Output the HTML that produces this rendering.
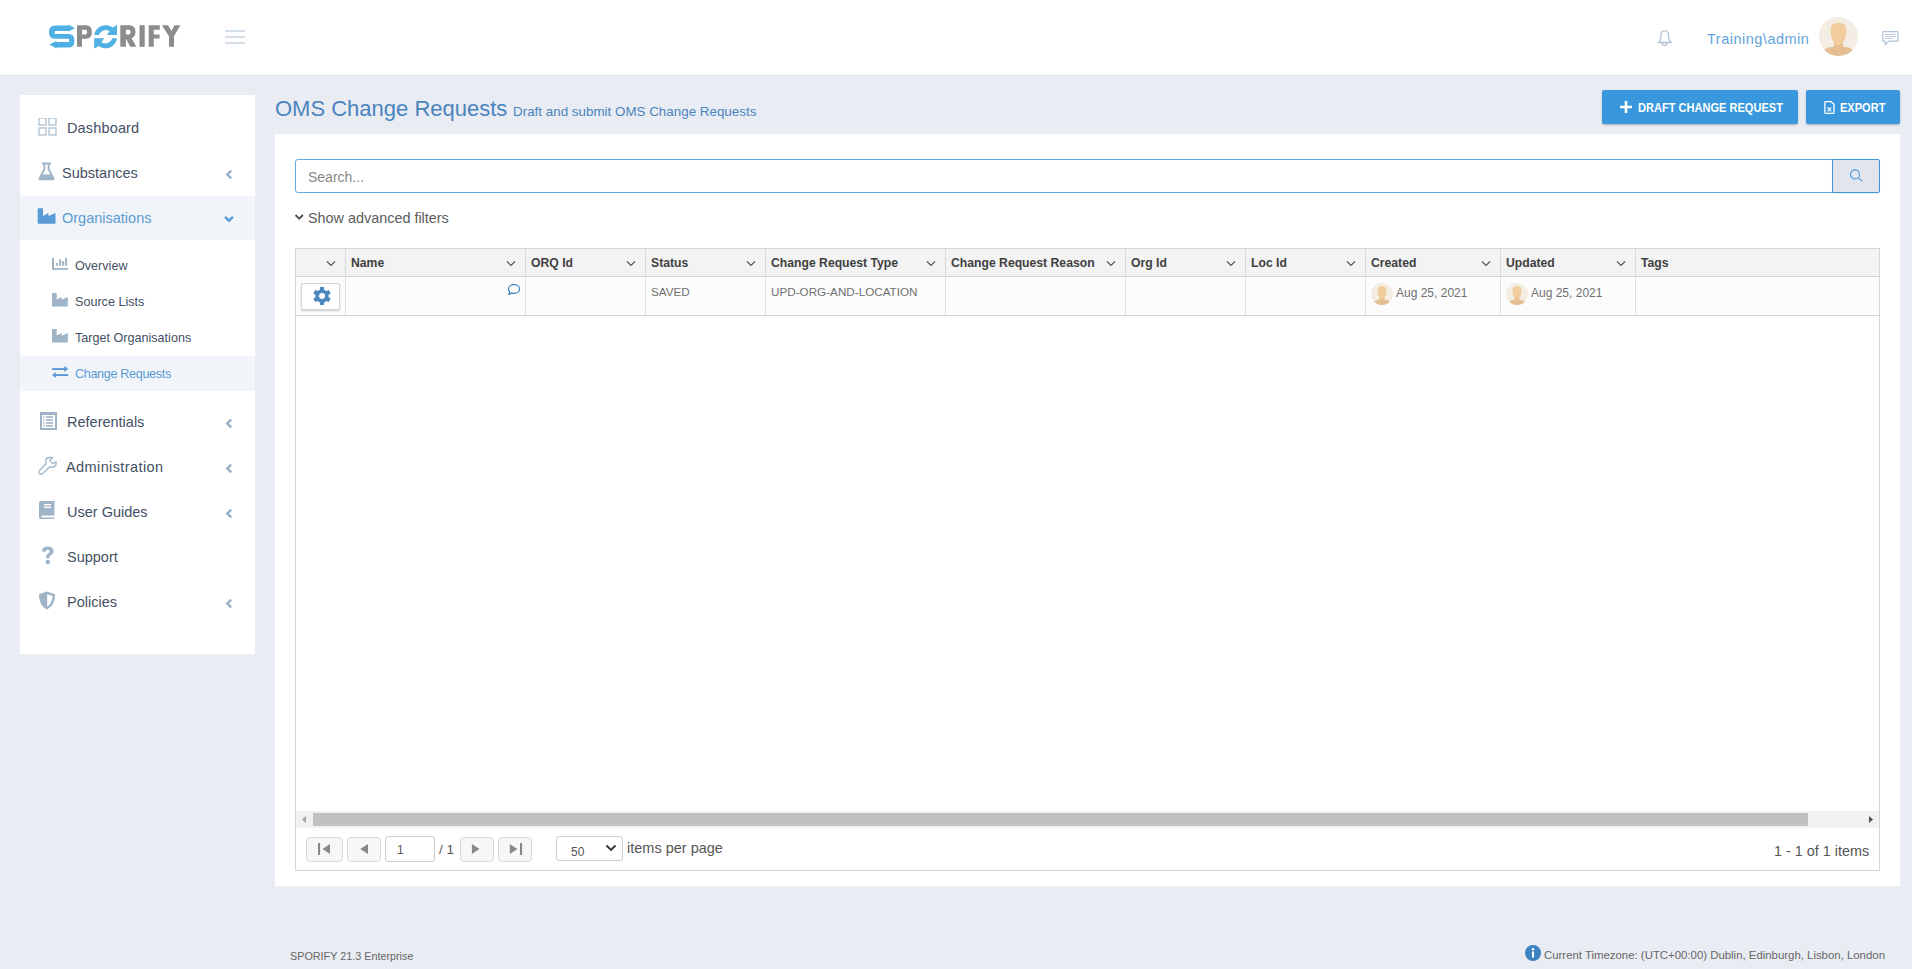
<!DOCTYPE html>
<html><head><meta charset="utf-8"><style>
*{box-sizing:border-box;margin:0;padding:0}
html,body{width:1912px;height:969px;overflow:hidden;background:#e9ecf3;font-family:"Liberation Sans",sans-serif;color:#333}
.a{position:absolute}
.tx{position:absolute;white-space:nowrap;line-height:normal}
</style></head>
<body>
<div class="a" style="left:0;top:0;width:1912px;height:76px;background:#fff;border-bottom:1px solid #dfe2e9"></div>
<svg class="a" style="left:0;top:0" width="200" height="75" viewBox="0 0 200 75">
    <g fill="#4fb0e3">
      <path d="M55.5 25.4 H68.3 V24.6 L75 28.2 L68.3 31.6 V31 H55.5 Q54.7 31 54.7 31.8 V33.2 Q54.7 34 55.5 34 H68.5 Q74.3 34 74.3 40 V41.4 Q74.3 47.4 68.5 47.4 H56.5 V48.5 L49.4 44.6 L56.5 41 V42 H68.3 Q69.1 42 69.1 41.2 V39.6 Q69.1 38.8 68.3 38.8 H55 Q49 38.8 49 32.8 V31.4 Q49 25.4 55.5 25.4 Z"/>
      <path d="M94.2 35 A11.5 11.8 0 0 1 112.5 27.6 L117 25 V35 H107 L109.6 31.2 A7.2 7.2 0 0 0 98.9 35 Z"/>
      <path d="M117 38.2 A11.5 11.8 0 0 1 98.8 46 L94.2 48.5 V38.2 H104.2 L101.4 42.2 A7.2 7.2 0 0 0 112.3 38.2 Z"/>
    </g>
    <g fill="#8c8c8c">
      <path d="M77 25.2 H86 Q91.9 25.2 91.9 32 Q91.9 38.8 86 38.8 H82 V46.8 H77 Z M82 29.8 V34.6 H85.6 Q87 34.6 87 32.2 Q87 29.8 85.6 29.8 Z"/>
      <path d="M120.3 25.2 H129.5 Q135.5 25.2 135.5 31.7 Q135.5 36.6 131.6 38 L136.2 46.8 H130.3 L126.2 39.2 H125.9 V46.8 H120.3 Z M125.9 29.8 V34.6 H129 Q130.6 34.6 130.6 32.2 Q130.6 29.8 129 29.8 Z"/>
      <rect x="139.5" y="25.2" width="5.2" height="21.6"/>
      <path d="M148.7 25.2 H159.8 V29.8 H153.8 V34.4 H159.6 V38.4 H153.8 V46.8 H148.7 Z"/>
      <path d="M161.9 25.2 H168 L171.5 31.1 L174.4 25.2 H180.3 L174 36.3 V46.8 H169 V36.3 Z"/>
    </g>
  </svg>
<div class="a" style="left:225px;top:30px;width:20px;height:2px;background:#d6dee9"></div>
<div class="a" style="left:225px;top:36px;width:20px;height:2px;background:#d6dee9"></div>
<div class="a" style="left:225px;top:42px;width:20px;height:2px;background:#d6dee9"></div>
<svg class="a" style="left:1656px;top:29px" width="18" height="18" viewBox="0 0 18 18">
    <path d="M2.3 13.5 H15.4 Q12.6 11.5 12.6 9.5 V6 A3.9 4.2 0 0 0 4.8 6 V9.5 Q4.8 11.5 2.3 13.5 Z" fill="none" stroke="#b3c4d8" stroke-width="1.3" stroke-linejoin="round"/>
    <path d="M6.4 13.9 A2.3 2.4 0 0 0 11 13.9" fill="none" stroke="#b3c4d8" stroke-width="1.3"/>
  </svg>
<div class="tx" style="left:1707px;top:31px;font-size:14.5px;color:#64a4dc;letter-spacing:0.5px">Training\admin</div>
<svg class="a" style="left:1819px;top:17px" width="39" height="39" viewBox="0 0 39 39">
    <defs><clipPath id="cav"><circle cx="19.5" cy="19.5" r="19.5"/></clipPath></defs><circle cx="19.5" cy="19.5" r="19.5" fill="#f3ede4"/>
    <g clip-path="url(#cav)">
      <path d="M1 40 Q3 31.5 12 30 Q19.5 28.5 27 30 Q36 31.5 38 40 Z" fill="#e5bf93"/>
      <path d="M15 23 V29.5 Q19.5 33.5 24 29.5 V23 Z" fill="#e6c091"/>
      <path d="M19.5 5.8 C13 5.8 11.4 9.5 11.6 14.5 C11.8 20.5 14.5 27.5 19.5 28.3 C24.5 27.5 27.2 20.5 27.4 14.5 C27.6 9.5 26 5.8 19.5 5.8 Z" fill="#f1cc9c"/>
    </g>
  </svg>
<svg class="a" style="left:1881px;top:30px" width="19" height="16" viewBox="0 0 19 16">
    <path d="M1.8 1.7 H16.9 V11.2 H7.9 L4.2 14.7 V11.2 H1.8 Z" fill="none" stroke="#b3c4d8" stroke-width="1.2" stroke-linejoin="round"/>
    <path d="M4 4.5 H14.6 M4 6.5 H14.6 M4 8.5 H11.8" stroke="#b3c4d8" stroke-width="0.9"/>
  </svg>
<div class="a" style="left:20px;top:95px;width:235px;height:559px;background:#fff"></div>
<div class="a" style="left:20px;top:196px;width:235px;height:44px;background:#f1f4f8"></div>
<div class="a" style="left:20px;top:356px;width:235px;height:35px;background:#f1f4f8"></div>
<svg class="a" style="left:38px;top:118px" width="19" height="18" viewBox="0 1 19 18" fill="none" stroke="#a7bccd" stroke-width="1.2">
      <rect x="1" y="1" width="7" height="7"/><rect x="11" y="1" width="7" height="7"/>
      <rect x="1" y="11" width="7" height="7"/><rect x="11" y="11" width="7" height="7"/></svg>
<div class="tx" style="left:67px;top:120px;font-size:14.5px;color:#445064;letter-spacing:0.15px">Dashboard</div>
<svg class="a" style="left:38px;top:162px" width="17" height="19" viewBox="0 0 17 19">
      <path d="M4 0.5 H13 V2.6 H11.6 V7 L16.3 16 Q17 18.3 14.8 18.3 H2.2 Q0 18.3 0.7 16 L5.4 7 V2.6 H4 Z M7.3 2.6 V7.6 L4.6 12.6 H12.4 L9.7 7.6 V2.6 Z" fill="#9fb4c6" fill-rule="evenodd"/></svg>
<div class="tx" style="left:62px;top:165px;font-size:14.5px;color:#445064;">Substances</div>
<svg class="a" style="left:222px;top:166px" width="14" height="14" viewBox="0 0 14 14"><path d="M9.2 4.6 L5.3 8.5 L9.2 12.4" fill="none" stroke="#98afc5" stroke-width="2.4"/></svg>
<svg class="a" style="left:37px;top:208px" width="19" height="17" viewBox="0 0 19 17">
      <path d="M0.7 0.2 H6 V8 L11.4 5 V8 L18.5 5 V15.8 H0.7 Z" fill="#5b9bd5"/></svg>
<div class="tx" style="left:62px;top:210px;font-size:14.5px;color:#5b9bd5;">Organisations</div>
<svg class="a" style="left:222px;top:212px" width="14" height="12" viewBox="0 0 14 12"><path d="M3 4.8 L7 8.7 L11 4.8" fill="none" stroke="#5b9bd5" stroke-width="2.4"/></svg>
<svg class="a" style="left:52px;top:258px" width="17" height="13" viewBox="0 0 17 13" fill="#9fb4c6">
      <rect x="0" y="0" width="2" height="11.8"/><rect x="0" y="10" width="16" height="1.8"/>
      <rect x="4.2" y="5" width="1.9" height="2.8"/><rect x="7.3" y="1.2" width="1.9" height="6.6"/><rect x="10.2" y="3.2" width="2" height="4.6"/><rect x="13.1" y="0" width="1.9" height="7.8"/></svg>
<div class="tx" style="left:75px;top:259px;font-size:12.6px;color:#445064;">Overview</div>
<svg class="a" style="left:52px;top:293px" width="17" height="14" viewBox="0 0 17 14"><path d="M0 0 H4.7 V6.5 L9.8 4 V6.8 L15.8 4 V13.6 H0 Z" fill="#9fb4c6"/></svg>
<div class="tx" style="left:75px;top:295px;font-size:12.6px;color:#445064;">Source Lists</div>
<svg class="a" style="left:52px;top:329px" width="17" height="14" viewBox="0 0 17 14"><path d="M0 0 H4.7 V6.5 L9.8 4 V6.8 L15.8 4 V13.6 H0 Z" fill="#9fb4c6"/></svg>
<div class="tx" style="left:75px;top:331px;font-size:12.6px;color:#445064;">Target Organisations</div>
<svg class="a" style="left:52px;top:365px" width="17" height="14" viewBox="0 0 17 14" fill="#5b9bd5">
      <rect x="0" y="3.1" width="13" height="1.9"/><path d="M12.3 0.8 L16.1 4 L12.3 7.1 Z"/>
      <rect x="3.2" y="9.1" width="12.9" height="1.9"/><path d="M3.8 6.9 L0 10 L3.8 13.1 Z"/></svg>
<div class="tx" style="left:75px;top:367px;font-size:12.6px;color:#5b9bd5;letter-spacing:-0.33px">Change Requests</div>
<svg class="a" style="left:40px;top:412px" width="18" height="18" viewBox="0 0 18 18">
      <path d="M0 0 H17 V18 H0 Z M2 3 V16 H15 V3 Z" fill="#9fb4c6" fill-rule="evenodd"/>
      <g fill="#9fb4c6"><rect x="3.2" y="4.2" width="1.2" height="1.6"/><rect x="6" y="4.2" width="7" height="1.6"/>
      <rect x="3.2" y="7.2" width="1.2" height="1.6"/><rect x="6" y="7.2" width="7" height="1.6"/>
      <rect x="3.2" y="10.2" width="1.2" height="1.6"/><rect x="6" y="10.2" width="7" height="1.6"/>
      <rect x="3.2" y="13" width="1.2" height="1.6"/><rect x="6" y="13" width="7" height="1.6"/></g></svg>
<div class="tx" style="left:67px;top:414px;font-size:14.5px;color:#445064;">Referentials</div>
<svg class="a" style="left:222px;top:415px" width="14" height="14" viewBox="0 0 14 14"><path d="M9.2 4.6 L5.3 8.5 L9.2 12.4" fill="none" stroke="#98afc5" stroke-width="2.4"/></svg>
<svg class="a" style="left:34px;top:452px" width="28" height="28" viewBox="34 452 28 28">
      <path d="M45.8 464 L45.8 460.5 Q46.2 457.6 49 457.5 L52.6 457.5 L49.8 460.6 L52.8 463.9 L56.2 461.4 L56 464.5 Q55 467.5 51.6 467.3 L49.6 466.7 L42.6 473.6 Q41 475 39.5 473.5 Q38.2 472 39.6 470.5 Z" fill="none" stroke="#9fb8cd" stroke-width="1.3" stroke-linejoin="round"/></svg>
<div class="tx" style="left:66px;top:459px;font-size:14.5px;color:#445064;letter-spacing:0.4px">Administration</div>
<svg class="a" style="left:222px;top:460px" width="14" height="14" viewBox="0 0 14 14"><path d="M9.2 4.6 L5.3 8.5 L9.2 12.4" fill="none" stroke="#98afc5" stroke-width="2.4"/></svg>
<svg class="a" style="left:39px;top:501px" width="17" height="19" viewBox="0 0 17 19">
      <path d="M2 0 H15.5 V14.5 H3.2 Q2.2 14.5 2.2 15.5 Q2.2 16.5 3.2 16.5 H15.5 V18 H2 Q0 18 0 16 V2 Q0 0 2 0 Z" fill="#9fb4c6"/>
      <rect x="5" y="3" width="7" height="1.4" fill="#fff"/><rect x="5" y="5.6" width="7" height="1.4" fill="#fff"/></svg>
<div class="tx" style="left:67px;top:504px;font-size:14.5px;color:#445064;">User Guides</div>
<svg class="a" style="left:222px;top:505px" width="14" height="14" viewBox="0 0 14 14"><path d="M9.2 4.6 L5.3 8.5 L9.2 12.4" fill="none" stroke="#98afc5" stroke-width="2.4"/></svg>
<svg class="a" style="left:41px;top:546px" width="14" height="19" viewBox="0 0 14 19">
      <path d="M1 5.5 Q1 0.5 6.5 0.5 Q12.5 0.5 12.5 5.2 Q12.5 8 9.5 9.5 Q8.5 10 8.5 11.5 V12.2 H5 V11 Q5 8.3 7.3 7.3 Q8.8 6.6 8.8 5.3 Q8.8 3.8 6.7 3.8 Q4.6 3.8 4.6 5.8 Z" fill="#9fb4c6"/>
      <circle cx="6.8" cy="16" r="2.2" fill="#9fb4c6"/></svg>
<div class="tx" style="left:67px;top:549px;font-size:14.5px;color:#445064;">Support</div>
<svg class="a" style="left:38px;top:591px" width="18" height="19" viewBox="0 0 18 19">
      <path d="M9 0.5 L17 3.2 Q17.2 14 9 18.6 Q0.8 14 1 3.2 Z" fill="#9fb4c6"/>
      <path d="M9.2 3.2 L9.2 15.6 Q14.2 12.3 14.6 5 Z" fill="#fff"/></svg>
<div class="tx" style="left:67px;top:594px;font-size:14.5px;color:#445064;">Policies</div>
<svg class="a" style="left:222px;top:595px" width="14" height="14" viewBox="0 0 14 14"><path d="M9.2 4.6 L5.3 8.5 L9.2 12.4" fill="none" stroke="#98afc5" stroke-width="2.4"/></svg>
<div class="tx" style="left:275px;top:96px;font-size:22px;color:#4a84bf;">OMS Change Requests</div>
<div class="tx" style="left:513px;top:104px;font-size:13.4px;color:#4a84bf;">Draft and submit OMS Change Requests</div>
<div class="a" style="left:1602px;top:90px;width:196px;height:34px;background:#3897dd;border-radius:2px;box-shadow:0 1px 2px rgba(0,0,0,.25)"></div>
<svg class="a" style="left:1620px;top:101px" width="12" height="12" viewBox="0 0 12 12"><path d="M4.7 0 H7.3 V4.7 H12 V7.3 H7.3 V12 H4.7 V7.3 H0 V4.7 H4.7 Z" fill="#fff"/></svg>
<div class="tx" style="left:1637.5px;top:101px;font-size:12.5px;font-weight:700;color:#fff;transform:scaleX(0.884);transform-origin:0 0">DRAFT CHANGE REQUEST</div>
<div class="a" style="left:1806px;top:90px;width:94px;height:34px;background:#3897dd;border-radius:2px;box-shadow:0 1px 2px rgba(0,0,0,.25)"></div>
<svg class="a" style="left:1824px;top:101px" width="11" height="13" viewBox="0 0 11 13"><path d="M1.6 0.7 H7.2 L10 3.5 V11.6 Q10 12.3 9.3 12.3 H1.6 Q0.9 12.3 0.9 11.6 V1.4 Q0.9 0.7 1.6 0.7 Z" fill="none" stroke="#fff" stroke-width="1.3"/><path d="M3.6 6.4 L7.2 10.4 M7.2 6.4 L3.6 10.4" stroke="#fff" stroke-width="1.2"/></svg>
<div class="tx" style="left:1839.5px;top:101px;font-size:12.5px;font-weight:700;color:#fff;transform:scaleX(0.884);transform-origin:0 0">EXPORT</div>
<div class="a" style="left:275px;top:134px;width:1625px;height:752px;background:#fff"></div>
<div class="a" style="left:295px;top:159px;width:1585px;height:34px;border:1px solid #62a9e3;border-radius:3px;background:#fff"></div>
<div class="a" style="left:1832px;top:159px;width:48px;height:34px;background:#e2e6ec;border:1px solid #3a98dc;border-radius:2px;box-shadow:0 1px 1px rgba(0,0,0,.08)"></div>
<svg class="a" style="left:1849px;top:168px" width="15" height="15" viewBox="0 0 15 15"><circle cx="6" cy="6.4" r="4.5" fill="none" stroke="#4a9be0" stroke-width="1.1"/><path d="M9.2 9.6 L13.3 13.4" stroke="#4a9be0" stroke-width="1.2"/></svg>
<div class="tx" style="left:308px;top:169px;font-size:14px;color:#888;">Search...</div>
<svg class="a" style="left:294px;top:213px" width="11" height="9" viewBox="0 0 11 9"><path d="M1.5 2 L5.2 5.7 L8.9 2" fill="none" stroke="#555" stroke-width="2"/></svg>
<div class="tx" style="left:308px;top:210px;font-size:14.4px;color:#5c5c5c;">Show advanced filters</div>
<div class="a" style="left:295px;top:248px;width:1585px;height:623px;border:1px solid #d5d5d5;background:#fff"></div>
<div class="a" style="left:296px;top:249px;width:1583px;height:28px;background:#f3f3f3;border-bottom:1px solid #d2d2d2"></div>
<div class="a" style="left:296px;top:277px;width:1583px;height:39px;background:#fcfcfc;border-bottom:1px solid #d5d5d5"></div>
<div class="a" style="left:345px;top:249px;width:1px;height:27px;background:#d9d9d9"></div>
<div class="a" style="left:345px;top:278px;width:1px;height:37px;background:#dedede"></div>
<div class="a" style="left:525px;top:249px;width:1px;height:27px;background:#d9d9d9"></div>
<div class="a" style="left:525px;top:278px;width:1px;height:37px;background:#dedede"></div>
<div class="a" style="left:645px;top:249px;width:1px;height:27px;background:#d9d9d9"></div>
<div class="a" style="left:645px;top:278px;width:1px;height:37px;background:#dedede"></div>
<div class="a" style="left:765px;top:249px;width:1px;height:27px;background:#d9d9d9"></div>
<div class="a" style="left:765px;top:278px;width:1px;height:37px;background:#dedede"></div>
<div class="a" style="left:945px;top:249px;width:1px;height:27px;background:#d9d9d9"></div>
<div class="a" style="left:945px;top:278px;width:1px;height:37px;background:#dedede"></div>
<div class="a" style="left:1125px;top:249px;width:1px;height:27px;background:#d9d9d9"></div>
<div class="a" style="left:1125px;top:278px;width:1px;height:37px;background:#dedede"></div>
<div class="a" style="left:1245px;top:249px;width:1px;height:27px;background:#d9d9d9"></div>
<div class="a" style="left:1245px;top:278px;width:1px;height:37px;background:#dedede"></div>
<div class="a" style="left:1365px;top:249px;width:1px;height:27px;background:#d9d9d9"></div>
<div class="a" style="left:1365px;top:278px;width:1px;height:37px;background:#dedede"></div>
<div class="a" style="left:1500px;top:249px;width:1px;height:27px;background:#d9d9d9"></div>
<div class="a" style="left:1500px;top:278px;width:1px;height:37px;background:#dedede"></div>
<div class="a" style="left:1635px;top:249px;width:1px;height:27px;background:#d9d9d9"></div>
<div class="a" style="left:1635px;top:278px;width:1px;height:37px;background:#dedede"></div>
<svg class="a" style="left:326px;top:260px" width="10" height="7" viewBox="0 0 10 7"><path d="M1 1.5 L5 5.5 L9 1.5" fill="none" stroke="#555" stroke-width="1.1"/></svg>
<div class="tx" style="left:351px;top:256px;font-size:12.2px;font-weight:700;color:#404040;">Name</div>
<svg class="a" style="left:506px;top:260px" width="10" height="7" viewBox="0 0 10 7"><path d="M1 1.5 L5 5.5 L9 1.5" fill="none" stroke="#555" stroke-width="1.1"/></svg>
<div class="tx" style="left:531px;top:256px;font-size:12.2px;font-weight:700;color:#404040;">ORQ Id</div>
<svg class="a" style="left:626px;top:260px" width="10" height="7" viewBox="0 0 10 7"><path d="M1 1.5 L5 5.5 L9 1.5" fill="none" stroke="#555" stroke-width="1.1"/></svg>
<div class="tx" style="left:651px;top:256px;font-size:12.2px;font-weight:700;color:#404040;">Status</div>
<svg class="a" style="left:746px;top:260px" width="10" height="7" viewBox="0 0 10 7"><path d="M1 1.5 L5 5.5 L9 1.5" fill="none" stroke="#555" stroke-width="1.1"/></svg>
<div class="tx" style="left:771px;top:256px;font-size:12.2px;font-weight:700;color:#404040;">Change Request Type</div>
<svg class="a" style="left:926px;top:260px" width="10" height="7" viewBox="0 0 10 7"><path d="M1 1.5 L5 5.5 L9 1.5" fill="none" stroke="#555" stroke-width="1.1"/></svg>
<div class="tx" style="left:951px;top:256px;font-size:12.2px;font-weight:700;color:#404040;">Change Request Reason</div>
<svg class="a" style="left:1106px;top:260px" width="10" height="7" viewBox="0 0 10 7"><path d="M1 1.5 L5 5.5 L9 1.5" fill="none" stroke="#555" stroke-width="1.1"/></svg>
<div class="tx" style="left:1131px;top:256px;font-size:12.2px;font-weight:700;color:#404040;">Org Id</div>
<svg class="a" style="left:1226px;top:260px" width="10" height="7" viewBox="0 0 10 7"><path d="M1 1.5 L5 5.5 L9 1.5" fill="none" stroke="#555" stroke-width="1.1"/></svg>
<div class="tx" style="left:1251px;top:256px;font-size:12.2px;font-weight:700;color:#404040;">Loc Id</div>
<svg class="a" style="left:1346px;top:260px" width="10" height="7" viewBox="0 0 10 7"><path d="M1 1.5 L5 5.5 L9 1.5" fill="none" stroke="#555" stroke-width="1.1"/></svg>
<div class="tx" style="left:1371px;top:256px;font-size:12.2px;font-weight:700;color:#404040;">Created</div>
<svg class="a" style="left:1481px;top:260px" width="10" height="7" viewBox="0 0 10 7"><path d="M1 1.5 L5 5.5 L9 1.5" fill="none" stroke="#555" stroke-width="1.1"/></svg>
<div class="tx" style="left:1506px;top:256px;font-size:12.2px;font-weight:700;color:#404040;">Updated</div>
<svg class="a" style="left:1616px;top:260px" width="10" height="7" viewBox="0 0 10 7"><path d="M1 1.5 L5 5.5 L9 1.5" fill="none" stroke="#555" stroke-width="1.1"/></svg>
<div class="tx" style="left:1641px;top:256px;font-size:12.2px;font-weight:700;color:#404040;">Tags</div>
<div class="a" style="left:301px;top:283px;width:39px;height:27px;background:#fff;border:1px solid #d5d5d5;border-radius:2px;box-shadow:0 1px 2px rgba(0,0,0,.2)"></div>
<svg class="a" style="left:312px;top:286px" width="20" height="20" viewBox="0 0 20 20"><g fill="#4a88bd"><path d="M7.70 4.50 L8.10 1.10 L11.90 1.10 L12.30 4.50 Z M13.61 5.26 L16.76 3.90 L18.66 7.20 L15.91 9.24 Z M15.91 10.76 L18.66 12.80 L16.76 16.10 L13.61 14.74 Z M12.30 15.50 L11.90 18.90 L8.10 18.90 L7.70 15.50 Z M6.39 14.74 L3.24 16.10 L1.34 12.80 L4.09 10.76 Z M4.09 9.24 L1.34 7.20 L3.24 3.90 L6.39 5.26 Z"/><circle cx="10" cy="10" r="6.6"/></g><circle cx="10" cy="10" r="3" fill="#fff"/></svg>
<svg class="a" style="left:507px;top:283px" width="14" height="13" viewBox="0 0 14 13"><path d="M2.6 8.6 C1.8 7.8 1.4 6.9 1.4 6 C1.4 3.5 3.9 1.6 7 1.6 C10.1 1.6 12.6 3.5 12.6 6 C12.6 8.5 10.1 10.4 7 10.4 Q5.8 10.4 4.6 10.1 L1.6 11.4 Q2.8 10.2 2.6 8.6 Z" fill="none" stroke="#3d7ebf" stroke-width="1.2" stroke-linejoin="round"/></svg>
<div class="tx" style="left:651px;top:285px;font-size:11.7px;color:#707070;">SAVED</div>
<div class="tx" style="left:771px;top:285px;font-size:11.7px;color:#707070;">UPD-ORG-AND-LOCATION</div>
<svg class="a" style="left:1371px;top:283px" width="22" height="22" viewBox="0 0 39 39">
    <defs><clipPath id="cr0"><circle cx="19.5" cy="19.5" r="19.5"/></clipPath></defs><circle cx="19.5" cy="19.5" r="19.5" fill="#f3ede4"/>
    <g clip-path="url(#cr0)">
      <path d="M1 40 Q3 31.5 12 30 Q19.5 28.5 27 30 Q36 31.5 38 40 Z" fill="#e5bf93"/>
      <path d="M15 23 V29.5 Q19.5 33.5 24 29.5 V23 Z" fill="#e6c091"/>
      <path d="M19.5 5.8 C13 5.8 11.4 9.5 11.6 14.5 C11.8 20.5 14.5 27.5 19.5 28.3 C24.5 27.5 27.2 20.5 27.4 14.5 C27.6 9.5 26 5.8 19.5 5.8 Z" fill="#f1cc9c"/>
    </g></svg>
<div class="tx" style="left:1396px;top:286px;font-size:12px;color:#707070;">Aug 25, 2021</div>
<svg class="a" style="left:1506px;top:283px" width="22" height="22" viewBox="0 0 39 39">
    <defs><clipPath id="cr1"><circle cx="19.5" cy="19.5" r="19.5"/></clipPath></defs><circle cx="19.5" cy="19.5" r="19.5" fill="#f3ede4"/>
    <g clip-path="url(#cr1)">
      <path d="M1 40 Q3 31.5 12 30 Q19.5 28.5 27 30 Q36 31.5 38 40 Z" fill="#e5bf93"/>
      <path d="M15 23 V29.5 Q19.5 33.5 24 29.5 V23 Z" fill="#e6c091"/>
      <path d="M19.5 5.8 C13 5.8 11.4 9.5 11.6 14.5 C11.8 20.5 14.5 27.5 19.5 28.3 C24.5 27.5 27.2 20.5 27.4 14.5 C27.6 9.5 26 5.8 19.5 5.8 Z" fill="#f1cc9c"/>
    </g></svg>
<div class="tx" style="left:1531px;top:286px;font-size:12px;color:#707070;">Aug 25, 2021</div>
<div class="a" style="left:296px;top:811px;width:1583px;height:17px;background:#f1f1f1"></div>
<div class="a" style="left:313px;top:813px;width:1495px;height:13px;background:#c1c1c1"></div>
<svg class="a" style="left:300px;top:815px" width="8" height="9" viewBox="0 0 8 9"><path d="M6 1 L2 4.5 L6 8 Z" fill="#a3a3a3"/></svg>
<svg class="a" style="left:1867px;top:815px" width="8" height="9" viewBox="0 0 8 9"><path d="M2 1 L6 4.5 L2 8 Z" fill="#505050"/></svg>
<div style="position:absolute;top:837px;height:25px;background:#f7f7f7;border:1px solid #d9d9d9;border-radius:4px;left:306px;width:37px"></div>
<div style="position:absolute;top:837px;height:25px;background:#f7f7f7;border:1px solid #d9d9d9;border-radius:4px;left:347px;width:34px"></div>
<div style="position:absolute;top:837px;height:25px;background:#f7f7f7;border:1px solid #d9d9d9;border-radius:4px;left:460px;width:34px"></div>
<div style="position:absolute;top:837px;height:25px;background:#f7f7f7;border:1px solid #d9d9d9;border-radius:4px;left:498px;width:34px"></div>
<div class="a" style="left:385px;top:836px;width:50px;height:26px;border:1px solid #ccc;border-radius:3px;background:#fff"></div>
<svg class="a" style="left:300px;top:835px" width="230" height="30" viewBox="300 835 230 30" fill="#888">
  <rect x="318" y="843" width="2.1" height="12"/><path d="M322.4 848.9 L330 843.9 V854 Z"/>
  <path d="M360.3 848.9 L368 843.9 V854 Z"/>
  <path d="M479.5 848.9 L471.9 843.9 V854 Z"/>
  <path d="M517.4 848.9 L509.8 843.9 V854 Z"/><rect x="520" y="843" width="2.1" height="12"/>
</svg>
<div class="tx" style="left:397px;top:843px;font-size:12px;color:#555;">1</div>
<div class="tx" style="left:439px;top:842px;font-size:13.5px;color:#555;">/ 1</div>
<div class="a" style="left:556px;top:836px;width:67px;height:25px;border:1px solid #ccc;border-radius:3px;background:#fff"></div>
<div class="tx" style="left:571px;top:845px;font-size:12px;color:#555;">50</div>
<svg class="a" style="left:605px;top:844px" width="12" height="8" viewBox="0 0 12 8"><path d="M1.5 1.5 L6 6 L10.5 1.5" fill="none" stroke="#333" stroke-width="1.8"/></svg>
<div class="tx" style="left:627px;top:840px;font-size:14.5px;color:#555;">items per page</div>
<div class="tx" style="left:1774px;top:843px;font-size:14.4px;color:#555;">1 - 1 of 1 items</div>
<div class="tx" style="left:290px;top:950px;font-size:10.8px;color:#666;">SPORIFY 21.3 Enterprise</div>
<svg class="a" style="left:1525px;top:945px" width="16" height="16" viewBox="0 0 16 16"><circle cx="8" cy="8" r="8" fill="#3d82c2"/><rect x="7" y="6.5" width="2" height="6" fill="#fff"/><circle cx="8" cy="4.3" r="1.2" fill="#fff"/></svg>
<div class="tx" style="left:1544px;top:949px;font-size:11.4px;color:#666;">Current Timezone: (UTC+00:00) Dublin, Edinburgh, Lisbon, London</div>
</body></html>
